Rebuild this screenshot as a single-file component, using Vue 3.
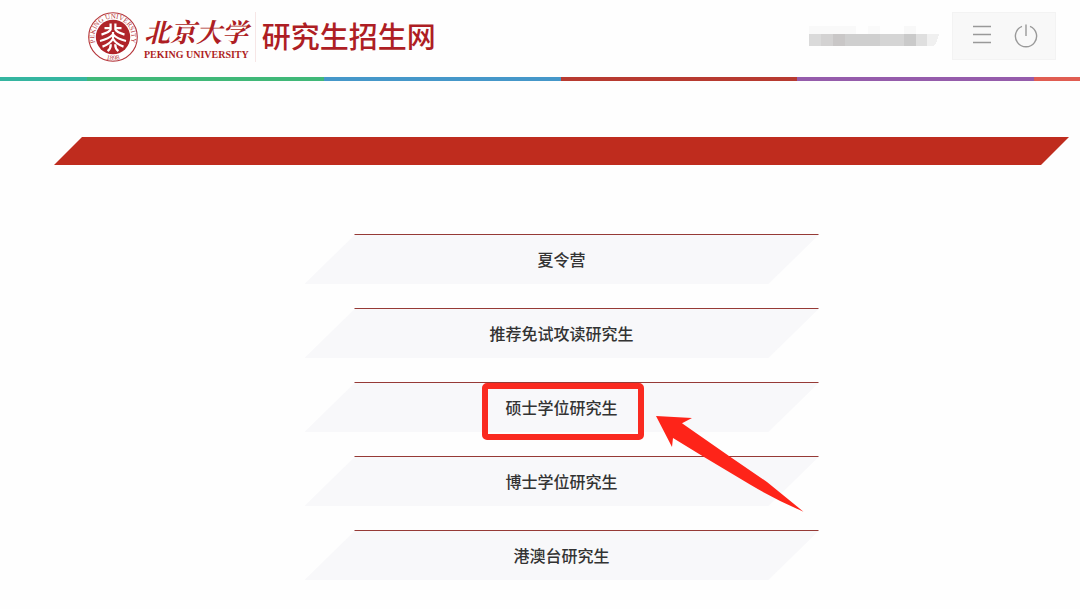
<template>
  <div class="page">
    <header class="header">
      <a class="brand" href="#">
        <svg class="seal" viewBox="0 0 50 50" aria-hidden="true">
          <defs>
            <path id="ring-top" d="M8.7 34 A18.6 18.6 0 1 1 41.3 34" />
            <path id="ring-bottom" d="M12 44.2 A23.2 23.2 0 0 0 38 44.2" />
          </defs>
          <circle cx="25" cy="25" r="24.3" fill="#fff" stroke="#b5363b" stroke-width="1.1" />
          <text class="seal-text">
            <textPath href="#ring-top" startOffset="50%" text-anchor="middle">PEKING UNIVERSITY</textPath>
          </text>
          <text class="seal-text">
            <textPath href="#ring-bottom" startOffset="50%" text-anchor="middle">1898</textPath>
          </text>
          <circle cx="25" cy="25" r="17.2" fill="#b0242a" />
          <g fill="none" stroke="#fff" stroke-width="2.2">
            <path d="M22.6 11.5 V17.5 Q21.5 20 13.5 22.6" />
            <path d="M27.4 11.5 V17.5 Q28.5 20 36.5 22.6" />
            <path d="M16.5 16.2 H22.6 M27.4 16.2 H33.5" />
            <path d="M25 20 V26" />
            <path d="M12 29 Q20.5 27.2 25 22.6 Q29.5 27.2 38 29" />
            <path d="M14.5 34.6 Q22 32 25 26.8 Q28 32 35.5 34.6" />
            <path d="M19.6 39.2 Q22.8 36.6 22.8 32.2 M30.4 39.2 Q27.2 36.6 27.2 32.2" />
          </g>
        </svg>
        <span class="school">
          <span class="school-cn">北京大学</span>
          <span class="school-en">PEKING UNIVERSITY</span>
        </span>
        <span class="site-name">研究生招生网</span>
      </a>

      <div class="tools">
        <svg class="user" viewBox="0 0 130 20" shape-rendering="crispEdges" aria-hidden="true">
          <rect v-for="(b, i) in userBlocks" :key="i" :x="b.x" :y="b.y" :width="b.w" :height="b.h" :fill="b.color" />
          <path d="M118 8 H130 L127 18 L124 20 H118 Z" fill="#f0f0f0" />
        </svg>
        <div class="actions">
          <button type="button" aria-label="菜单">
            <svg viewBox="0 0 26 26">
              <path d="M4 3.5 H22 M4 11.5 H22 M4 19.5 H22" />
            </svg>
          </button>
          <button type="button" aria-label="退出">
            <svg viewBox="0 0 26 26">
              <path d="M9 3.3 A10.6 10.6 0 1 0 17 3.3 M13 1.5 V13" />
            </svg>
          </button>
        </div>
      </div>
    </header>
    <div class="stripe"></div>

    <main class="main">
      <div class="banner"></div>
      <nav class="menu">
        <a v-for="item in items" :key="item.name" class="menu-item" href="#">
          <span>{{ item.name }}</span>
          <template v-if="item.marked">
            <i class="mark"></i>
            <svg class="arrow" viewBox="0 0 148 96" aria-hidden="true">
              <path d="M0 0 L36 2 L26 7.3 L73 40 L111 66 L147.5 95.7 Q120 84 94 68.5 L48 41 L17 22 L16 31 Z" fill="#fe2419" />
            </svg>
          </template>
        </a>
      </nav>
    </main>
  </div>
</template>

<script setup>
const items = [
  { name: '夏令营' },
  { name: '推荐免试攻读研究生' },
  { name: '硕士学位研究生', marked: true },
  { name: '博士学位研究生' },
  { name: '港澳台研究生' },
];

// masked user name
const userBlocks = [
  { x: 0, y: 0, w: 47, h: 8, color: '#f9f9f9' },
  { x: 59, y: 0, w: 12, h: 8, color: '#fafafa' },
  { x: 95, y: 0, w: 12, h: 8, color: '#f8f8f8' },
  { x: 0, y: 8, w: 12, h: 12, color: '#dadada' },
  { x: 12, y: 8, w: 12, h: 12, color: '#d3d2d2' },
  { x: 24, y: 8, w: 12, h: 12, color: '#c9c7c7' },
  { x: 36, y: 8, w: 35, h: 12, color: '#cfcfcf' },
  { x: 71, y: 8, w: 24, h: 12, color: '#d5d5d5' },
  { x: 95, y: 8, w: 12, h: 12, color: '#cacaca' },
  { x: 107, y: 8, w: 11, h: 12, color: '#dfdfdf' },
];
</script>

<style>
body {
  margin: 0;
  background: #fefefe;
}
</style>

<style scoped>
.page {
  font-family: 'Liberation Sans', 'Noto Sans CJK SC', sans-serif;
  color: #333;
}

.header {
  display: flex;
  align-items: flex-start;
  justify-content: space-between;
  height: 65px;
  padding: 12px 24px 0 88px;
}

.brand {
  display: flex;
  align-items: flex-start;
  color: #ae1e24;
  text-decoration: none;
}

.seal {
  width: 50px;
  height: 50px;
}

.seal-text {
  font-family: 'Liberation Serif', serif;
  font-size: 7px;
  fill: #b5363b;
}

.school {
  display: flex;
  flex-direction: column;
  padding: 2px 6px 0;
  border-right: 1px solid #f6e6e6;
}

.school-cn {
  font-family: 'Noto Serif CJK SC', 'Noto Sans CJK SC', serif;
  font-size: 26px;
  font-style: italic;
  font-weight: bold;
  line-height: 34px;
}

.school-en {
  font-family: 'Liberation Serif', serif;
  font-size: 10px;
  font-weight: bold;
  line-height: 14px;
}

.site-name {
  margin-left: 6px;
  font-size: 29px;
  font-weight: 500;
  line-height: 52px;
}

.tools {
  display: flex;
  align-items: center;
  gap: 13px;
}

.user {
  width: 130px;
  height: 20px;
}

.actions {
  display: flex;
  align-items: center;
  gap: 18px;
  padding: 10px 16px;
  background: #f8f8f8;
  border: 1px solid #f3f3f3;
}

.actions button {
  width: 26px;
  height: 26px;
  padding: 0;
  background: none;
  border: none;
  cursor: pointer;
}

.actions svg {
  display: block;
  fill: none;
  stroke: #999;
  stroke-width: 1.4;
}

.stripe {
  height: 4px;
  background: linear-gradient(
    to right,
    #35b5a0 8.1%,
    #40b878 8.1% 30%,
    #4597c9 30% 51.9%,
    #b73a30 51.9% 73.8%,
    #955cab 73.8% 95.7%,
    #e05d52 95.7%
  );
}

.main {
  padding: 56px 11px 24px 54px;
}

.banner {
  height: 28px;
  background: #bf2c1e;
  clip-path: polygon(28px 0, 100% 0, calc(100% - 28px) 100%, 0 100%);
}

.menu {
  display: flex;
  flex-direction: column;
  gap: 24px;
  max-width: 514px;
  margin: 69px auto 0;
}

.menu-item {
  position: relative;
  display: flex;
  align-items: center;
  justify-content: center;
  height: 50px;
  color: #333;
  font-size: 16px;
  font-weight: 500;
  text-decoration: none;
}

.menu-item::before {
  content: '';
  position: absolute;
  inset: 0;
  background: linear-gradient(#963a36 1px, #f8f8fa 1px);
  clip-path: polygon(50px 0, 100% 0, 100% 1px, calc(100% - 50px) 100%, 0 100%, 50px 1px);
}

.menu-item span {
  position: relative;
}

.mark {
  position: absolute;
  top: 1px;
  left: calc(50% - 80px);
  box-sizing: border-box;
  width: 162px;
  height: 57px;
  border: 6px solid #fa2a20;
  border-radius: 5px;
}

.arrow {
  position: absolute;
  z-index: 1;
  top: 34px;
  left: calc(50% + 94px);
  width: 148px;
  height: 96px;
}
</style>
